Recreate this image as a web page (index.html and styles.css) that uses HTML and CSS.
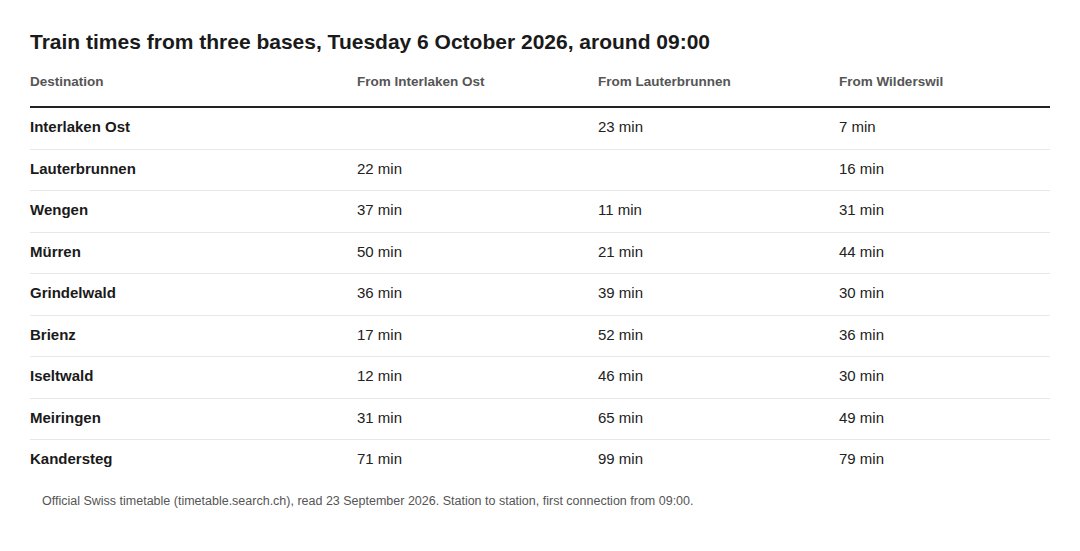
FILE: index.html
```html
<!DOCTYPE html>
<html lang="en">
<head>
<meta charset="utf-8">
<title>Train times</title>
<link rel="stylesheet" href="styles.css">
</head>
<body>
<main class="page">
  <h1 class="title">Train times from three bases, Tuesday 6 October 2026, around 09:00</h1>
  <table class="times">
    <colgroup>
      <col class="c-dest">
      <col class="c-mid">
      <col class="c-mid">
      <col class="c-last">
    </colgroup>
    <thead>
      <tr>
        <th>Destination</th>
        <th>From Interlaken Ost</th>
        <th>From Lauterbrunnen</th>
        <th>From Wilderswil</th>
      </tr>
    </thead>
    <tbody>
      <tr><th>Interlaken Ost</th><td></td><td>23 min</td><td>7 min</td></tr>
      <tr><th>Lauterbrunnen</th><td>22 min</td><td></td><td>16 min</td></tr>
      <tr><th>Wengen</th><td>37 min</td><td>11 min</td><td>31 min</td></tr>
      <tr><th>Mürren</th><td>50 min</td><td>21 min</td><td>44 min</td></tr>
      <tr><th>Grindelwald</th><td>36 min</td><td>39 min</td><td>30 min</td></tr>
      <tr><th>Brienz</th><td>17 min</td><td>52 min</td><td>36 min</td></tr>
      <tr><th>Iseltwald</th><td>12 min</td><td>46 min</td><td>30 min</td></tr>
      <tr><th>Meiringen</th><td>31 min</td><td>65 min</td><td>49 min</td></tr>
      <tr><th>Kandersteg</th><td>71 min</td><td>99 min</td><td>79 min</td></tr>
    </tbody>
  </table>
  <p class="note">Official Swiss timetable (timetable.search.ch), read 23 September 2026. Station to station, first connection from 09:00.</p>
</main>
</body>
</html>
```
FILE: styles.css
```css
html, body {
  margin: 0;
  padding: 0;
  background: #ffffff;
}
body {
  font-family: "Liberation Sans", Arial, sans-serif;
  color: #222222;
}
.page {
  width: 1020px;
  padding: 30px 30px 0 30px;
}
.title {
  margin: 0;
  font-size: 21px;
  line-height: 24px;
  font-weight: bold;
  color: #1a1a1a;
}
.times {
  width: 1020px;
  border-collapse: collapse;
  margin-top: 3px;
  table-layout: fixed;
}
.c-dest { width: 327px; }
.c-mid { width: 241px; }
.c-last { width: 211px; }
.times thead th {
  text-align: left;
  font-size: 13.5px;
  font-weight: bold;
  color: #555555;
  line-height: 16px;
  padding: 17px 0 16px 0;
  border-bottom: 2px solid #222222;
}
.times tbody th,
.times tbody td {
  text-align: left;
  font-size: 15px;
  line-height: 16.5px;
  padding: 11px 0 13px 0;
  border-bottom: 1px solid #e8e8e8;
}
.times tbody th {
  font-weight: bold;
  color: #1a1a1a;
}
.times tbody td {
  font-weight: normal;
  color: #222222;
}
.times tbody tr:last-child th,
.times tbody tr:last-child td {
  border-bottom: none;
}
.note {
  margin: 12px 0 0 12px;
  font-size: 12.5px;
  line-height: 16px;
  color: #555555;
}
```
